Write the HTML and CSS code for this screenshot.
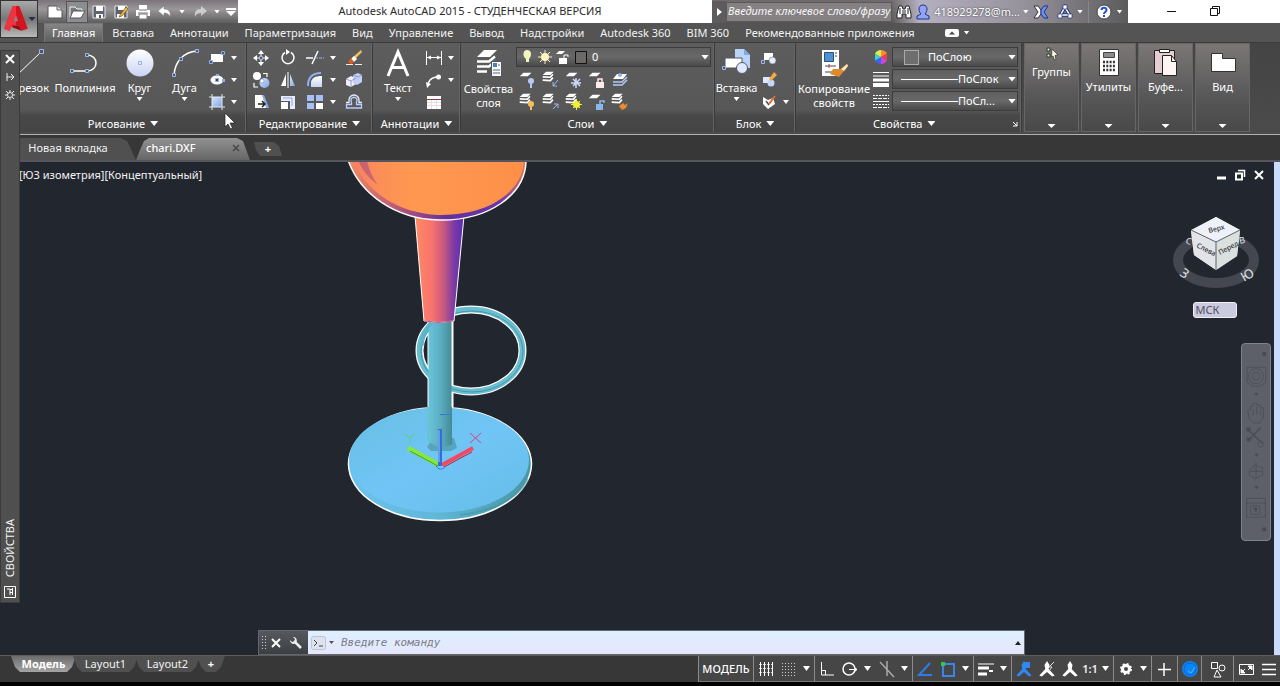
FILE: index.html
```html
<!DOCTYPE html>
<html lang="ru">
<head>
<meta charset="utf-8">
<meta name="viewport" content="width=device-width">
<title>Autodesk AutoCAD 2015</title>
<link rel="stylesheet" href="styles.css">
</head>
<body>
<svg class="defs" aria-hidden="true">
  <defs>
    <linearGradient id="pale" x1="0" y1="0" x2="0" y2="1"><stop offset="0" stop-color="#fff"/><stop offset="1" stop-color="#c9d3f3"/></linearGradient>
    <linearGradient id="blue" x1="0" y1="0" x2="1" y2="1"><stop offset="0" stop-color="#d9e4fb"/><stop offset="1" stop-color="#7fa2e0"/></linearGradient>
    <linearGradient id="seat" x1="0" y1="0" x2="1" y2="0"><stop offset="0" stop-color="#fb7d62"/><stop offset=".14" stop-color="#fb8e58"/><stop offset=".35" stop-color="#ff9850"/><stop offset="1" stop-color="#fd9049"/></linearGradient>
    <linearGradient id="cone" x1="0" y1="0" x2="1" y2="0"><stop offset="0" stop-color="#ff8a62"/><stop offset=".35" stop-color="#f8736f"/><stop offset=".58" stop-color="#c9597f"/><stop offset=".8" stop-color="#7a3aa6"/><stop offset="1" stop-color="#5a2cb4"/></linearGradient>
    <linearGradient id="rim" x1="0" y1="0" x2="1" y2="0"><stop offset="0" stop-color="#f48a60"/><stop offset=".3" stop-color="#b2557c"/><stop offset=".55" stop-color="#64309c"/><stop offset=".85" stop-color="#6a35a8"/><stop offset="1" stop-color="#e37a5e"/></linearGradient>
    <linearGradient id="pole" x1="0" y1="0" x2="1" y2="0"><stop offset="0" stop-color="#68c4d8"/><stop offset=".5" stop-color="#5cafc4"/><stop offset="1" stop-color="#458b96"/></linearGradient>
    <linearGradient id="disc" x1="0" y1="0" x2="1" y2="1"><stop offset="0" stop-color="#67bfe2"/><stop offset=".5" stop-color="#70c5f6"/><stop offset="1" stop-color="#66bde6"/></linearGradient>
    <linearGradient id="side" x1="0" y1="0" x2="1" y2="0"><stop offset="0" stop-color="#6cc3ef"/><stop offset=".5" stop-color="#5fb6d6"/><stop offset="1" stop-color="#4796a4"/></linearGradient>
  </defs>
  <symbol id="i-layers" viewBox="0 0 20 20"><path d="M6 2h9l-4 4H2zM2 7.500h8M2 11.500h8" fill="#fff"/><path d="M2 8l9 .5 3-3.500M2 12l9 .5 3-3.500" fill="none" stroke="#fff" stroke-width="2"/></symbol>
  <symbol id="i-sheet" viewBox="0 0 20 20"><path d="M6 3h9l-4 4H2z" fill="#fff"/></symbol>
  <symbol id="i-person" viewBox="0 0 20 20"><path d="M10 2l2.500 4-.8 4 6 6.500-2.500 1L10 13l-5.200 4.500-2.500-1 6-6.500-.8-4z"/></symbol>
</svg>

<div class="app">
  <header class="top">
    <button class="app-button" aria-label="Меню приложения"><svg width="26" height="28" viewBox="0 0 24 26"><path d="M9 1h6l8 21-6 2-2-5H8l-2 5-5-2z" fill="#d3141f"/><path d="M9 1h3v18H8l-2 5-5-2z" fill="#ef3340"/><path d="M12 9l2 6h-4z" fill="#8d8288"/><path d="M8 19h7l2 5-8-3z" fill="#9c0812"/></svg><i class="caret dark"></i></button>
    <div class="titlebar">
      <div class="qat">
        <button aria-label="Создать"><svg width="18" height="16" viewBox="0 0 18 16"><path d="M2 2h9l5 4v8H2z" fill="#fff" stroke="#555"/><path d="M11 2v4h5" fill="#ddd" stroke="#666"/></svg></button>
        <button class="lit" aria-label="Открыть"><svg width="18" height="16" viewBox="0 0 18 16"><path d="M2 14V3h5l2 2h5v2" fill="#75797e" stroke="#f4f4f4"/><path d="M2 14l3-7h12l-4 7z" fill="#fff" stroke="#555"/></svg></button>
        <button aria-label="Сохранить"><svg width="16" height="16" viewBox="0 0 16 16"><path d="M2 2h12v12H2z" fill="#5d6470" stroke="#e8e8e8"/><path d="M5 2h7v5H5zM5 10h7v4H5z" fill="#fff"/><path d="M8 11h2v3H8z" fill="#555"/></svg></button>
        <button aria-label="Сохранить как"><svg width="16" height="16" viewBox="0 0 16 16"><path d="M2 2h12v12H2z" fill="#5d6470" stroke="#e8e8e8"/><path d="M5 2h7v4H5zM4 10h7v4H4z" fill="#fff"/><path d="M7 11l6-8 2 2-6 7-3 1z" fill="#f0b93c" stroke="#6b4210" stroke-width=".6"/></svg></button>
        <button aria-label="Печать"><svg width="16" height="16" viewBox="0 0 16 16"><path d="M4 1h8v5H4zM1 6h14v6H1z" fill="#fff"/><path d="M4 6h8M3 9h10" stroke="#777"/><path d="M4 10h8v5H4z" fill="#fff" stroke="#777"/></svg></button>
        <button aria-label="Отменить"><svg width="16" height="16" viewBox="0 0 16 16"><path d="M7 2v3c5 0 7 3 6 8-1-3-3-4-6-4v3L1 7z" fill="#fff" stroke="#777" stroke-width=".5"/></svg></button>
        <i class="caret"></i>
        <button class="faded" aria-label="Повторить"><svg width="16" height="16" viewBox="0 0 16 16"><path d="M9 2v3C4 5 2 8 3 13c1-3 3-4 6-4v3l6-5z" fill="#e6e6e6"/></svg></button>
        <i class="caret"></i>
        <button class="slim" aria-label="Настроить панель"><svg width="10" height="10" viewBox="0 0 10 10"><path d="M0 1h10v2H0zM0 4h10L5 9z" fill="#fff"/></svg></button>
      </div>
      <h1 class="title">Autodesk AutoCAD 2015 - СТУДЕНЧЕСКАЯ ВЕРСИЯ</h1>
      <div class="info">
        <button class="slim" aria-label="Свернуть поиск"><svg width="6" height="8" viewBox="0 0 6 8"><path d="M1 0l5 4-5 4z" fill="#fff"/></svg></button>
        <input class="search" type="text" placeholder="Введите ключевое слово/фразу" aria-label="Поиск по справке">
        <button aria-label="Найти"><svg width="16" height="16" viewBox="0 0 16 16"><path d="M3 2h3l1 3h2l1-3h3l2 8v4h-5v-4H6v4H1v-4z" fill="#fff" stroke="#222"/><path d="M4 4v6M12 4v6M7 6v3M9 6v3" stroke="#222"/></svg></button>
        <button class="account"><svg width="16" height="16" viewBox="0 0 16 16"><path d="M8 1c3 0 4 2 4 4s-1 4-2 5l4 2v3H2v-3l4-2C5 9 4 7 4 5s1-4 4-4z" fill="#8da5f2" stroke="#22308f"/></svg><span>418929278@m...</span><i class="caret"></i></button>
        <button aria-label="Exchange"><svg width="16" height="16" viewBox="0 0 16 16"><path d="M1 2h4l3 4v4l-3 4H1l4-6z" fill="#fff" stroke="#333"/><path d="M15 2h-4L8 6v4l3 4h4l-4-6z" fill="#6d93f0" stroke="#22308f"/></svg></button>
        <button class="wide" aria-label="Связь"><svg width="16" height="16" viewBox="0 0 16 16"><path d="M8 3l4.500 8h-9z" fill="none" stroke="#27387f" stroke-width="3.500"/><path d="M8 3l4.500 8h-9z" fill="none" stroke="#fff" stroke-width="1.500"/><path d="M6 1h4v4H6zM1 10h4v4H1zM11 10h4v4h-4z" fill="#fff" stroke="#27387f" stroke-width=".7"/></svg><i class="caret"></i></button>
        <button class="wide help" aria-label="Справка"><svg width="18" height="18" viewBox="0 0 18 18"><circle cx="9" cy="9" r="7" fill="#fff" stroke="#444"/><path d="M6.500 7c0-3 5-3 5 0 0 2-2.500 2-2.500 4" fill="none" stroke="#2b50c8" stroke-width="2"/><path d="M8 12h2v2H8z" fill="#2b50c8"/></svg><i class="caret"></i></button>
      </div>
      <div class="window-buttons">
        <button aria-label="Свернуть"><svg width="12" height="12" viewBox="0 0 12 12"><path d="M1 6.500h9" stroke="#111"/></svg></button>
        <button aria-label="Развернуть"><svg width="12" height="12" viewBox="0 0 12 12"><path d="M1.500 3.500h7v7h-7zM3.500 3V1.500h7v7H9" fill="none" stroke="#111"/></svg></button>
        <button aria-label="Закрыть"></button>
      </div>
    </div>
    <nav class="ribbon-tabs">
      <button class="current">Главная</button><button>Вставка</button><button>Аннотации</button><button>Параметризация</button><button>Вид</button><button>Управление</button><button>Вывод</button><button>Надстройки</button><button>Autodesk 360</button><button>BIM 360</button><button>Рекомендованные приложения</button>
      <button class="ribbon-min" aria-label="Свернуть ленту"><svg width="14" height="8" viewBox="0 0 14 8"><rect width="14" height="8" rx="2" fill="#fff"/><path d="M4 5.500h6l-3-3z" fill="#444"/></svg><i class="caret"></i></button>
    </nav>
  </header>

  <div class="ribbon">
    <section class="panel draw">
      <div class="tools">
        <button class="big line"><svg width="40" height="34" viewBox="0 0 40 34"><path d="M8 30L34 5" stroke="#fff"/><path d="M32.500 2.500h4v4h-4z" fill="#555" stroke="#9db4f5"/></svg><span>Отрезок</span></button>
        <button class="big poly"><svg width="40" height="34" viewBox="0 0 40 34"><path d="M7 24h15c12 0 12-16 0-16" fill="none" stroke="#fff" stroke-width="1.500"/><path d="M5.500 22.500h3v3h-3zM20.500 22.500h3v3h-3zM20.500 6.500h3v3h-3z" fill="#555" stroke="#9db4f5"/></svg><span>Полилиния</span></button>
        <button class="big circle"><svg width="34" height="34" viewBox="0 0 34 34"><circle cx="17" cy="16" r="13.500" fill="url(#pale)"/><path d="M15.500 14.500h3v3h-3z" fill="none" stroke="#8fb3ee"/></svg><span>Круг</span><i class="caret"></i></button>
        <button class="big arc"><svg width="34" height="34" viewBox="0 0 34 34"><path d="M6 28C7 15 15 5 29 4" fill="none" stroke="#fff" stroke-width="1.500"/><path d="M4.500 26.500h3v3h-3zM11.500 10.500h3v3h-3zM27.500 2.500h3v3h-3z" fill="#555" stroke="#9db4f5"/></svg><span>Дуга</span><i class="caret"></i></button>
        <div class="grid pairs">
          <button aria-label="Прямоугольник"><svg width="20" height="20" viewBox="0 0 20 20"><path d="M4 6h12v8H4z" fill="#fff"/><path d="M2.500 12.500h3v3h-3zM14.500 3.500h3v3h-3z" fill="#555" stroke="#8faaf2"/></svg></button><i class="caret"></i>
          <button aria-label="Эллипс"><svg width="20" height="20" viewBox="0 0 20 20"><ellipse cx="10" cy="10" rx="6.500" ry="4.500" fill="#fff"/><path d="M8.500 8.500h3v3h-3z" fill="#445" stroke="#8faaf2"/><path d="M15 9h3v3h-3zM9 4h3v2H9z" fill="#8faaf2"/></svg></button><i class="caret"></i>
          <button aria-label="Штриховка"><svg width="20" height="20" viewBox="0 0 20 20"><path d="M5 5h10v10H5z" fill="url(#blue)"/><path d="M5 2v16M15 2v16M2 5h16M2 15h16" stroke="#dfe7fb"/></svg></button><i class="caret"></i>
        </div>
      </div>
      <h2>Рисование<i class="caret"></i></h2>
    </section>

    <section class="panel edit">
      <div class="tools">
        <div class="grid five">
          <button aria-label="Перенести"><svg width="20" height="20" viewBox="0 0 20 20"><path d="M10 2l3 4H7zM10 18l3-4H7zM2 10l4-3v6zM18 10l-4-3v6z" fill="#fff"/><path d="M10 5v10M5 10h10" stroke="#fff"/><path d="M8.500 8.500h3v3h-3z" fill="#555" stroke="#9db4f5"/></svg></button>
          <button aria-label="Повернуть"><svg width="20" height="20" viewBox="0 0 20 20"><path d="M7 4.500a6 6 0 1 0 6 0" fill="none" stroke="#fff" stroke-width="1.500"/><path d="M8 1v6l4-3z" fill="#fff"/></svg></button>
          <button aria-label="Обрезать"><svg width="20" height="20" viewBox="0 0 20 20"><path d="M1 10h7M7 16l6-13" stroke="#fff" stroke-width="1.500"/><path d="M10 10h9" stroke="#9db4f5" stroke-dasharray="3 1"/></svg></button><i class="caret"></i>
          <button aria-label="Стереть"><svg width="20" height="20" viewBox="0 0 20 20"><path d="M17 2l1 2-8 8-2-2z" fill="#f6c35c"/><path d="M10 8l3 3-3 3-3-3z" fill="#fff"/><path d="M7 10l3 4-3 2-3-2z" fill="#e8581d"/><path d="M2 16.500h16" stroke="#eee" stroke-dasharray="7 2"/></svg></button>
          <button aria-label="Копировать"><svg width="20" height="20" viewBox="0 0 20 20"><circle cx="6" cy="6" r="4" fill="#fff"/><circle cx="13.500" cy="13" r="5" fill="url(#blue)"/><path d="M12 3.500h4V7M3 13v4h4" fill="none" stroke="#fff" stroke-width="1.200"/><circle cx="11" cy="11" r="2" fill="#fff" stroke="#6d86c6" stroke-width=".6"/></svg></button>
          <button aria-label="Зеркало"><svg width="20" height="20" viewBox="0 0 20 20"><path d="M8 4v12H3z" fill="#fff"/><path d="M12 4v12h5z" fill="url(#blue)"/><path d="M10 2v16" stroke="#fff"/></svg></button>
          <button aria-label="Сопряжение"><svg width="20" height="20" viewBox="0 0 20 20"><path d="M6 17V12c1-4 4-6 11-6v11z" fill="url(#pale)"/><path d="M3 16C3 8 7 3 16 3" fill="none" stroke="#8fb0f0" stroke-width="2"/></svg></button><i class="caret"></i>
          <button aria-label="Расчленить"><svg width="20" height="20" viewBox="0 0 20 20"><path d="M2 9l5-3 5 2v6l-5 3-5-2z" fill="#eef1fd"/><path d="M9 5l5-2 4 2v7l-5 3-4-2z" fill="#c2cff8"/><path d="M2 9l5 2 5-3M7 11v6M9 5l5 2 4-2" fill="none" stroke="#8088c0" stroke-width=".8"/></svg></button>
          <button aria-label="Растянуть"><svg width="20" height="20" viewBox="0 0 20 20"><path d="M4 3h7l6 13H4z" fill="#fff"/><path d="M11 3h2l5 13h-3z" fill="#8eaceb"/><path d="M7 12h6M11 9l3 3-3 3" stroke="#222" fill="none" stroke-width="1.500"/></svg></button>
          <button aria-label="Масштаб"><svg width="20" height="20" viewBox="0 0 20 20"><path d="M3 4h14v13h-5V9H3z" fill="#e6ecfd"/><path d="M3 10h7v7H3z" fill="#fff"/><path d="M5 6h9v8" fill="none" stroke="#8ca8e8"/></svg></button>
          <button aria-label="Массив"><svg width="20" height="20" viewBox="0 0 20 20"><path d="M2 3h7v6H2zM11 3h7v6h-7zM2 11h7v6H2z" fill="#a6c0f6"/><path d="M11 11h7v6h-7z" fill="#fff"/></svg></button><i class="caret"></i>
          <button aria-label="Смещение"><svg width="20" height="20" viewBox="0 0 20 20"><path d="M2.500 12.500h5V10a3 3 0 1 1 5 0v2.500h5v3.500h-15z" fill="none" stroke="#b9cdfb" stroke-width="1.300"/><path d="M2 10.500h3V8a5 5 0 0 1 10 0v2.500h3" fill="none" stroke="#e8eeff" stroke-width="1.300"/></svg></button>
        </div>
      </div>
      <h2>Редактирование<i class="caret"></i></h2>
    </section>

    <section class="panel notes">
      <div class="tools">
        <button class="big text"><svg width="30" height="34" viewBox="0 0 30 34"><path d="M5 29L15 5l10 24M8.500 20.500h13" fill="none" stroke="#fff" stroke-width="3"/></svg><span>Текст</span><i class="caret"></i></button>
        <div class="grid pairs">
          <button aria-label="Размер"><svg width="20" height="20" viewBox="0 0 20 20"><path d="M2.500 3v14M17.500 3v14M3 9.500h14" stroke="#fff"/><path d="M3 9.500l4-2v4zM17 9.500l-4-2v4z" fill="#fff"/></svg></button><i class="caret"></i>
          <button aria-label="Выноска"><svg width="20" height="20" viewBox="0 0 20 20"><path d="M4 16c0-4 2-8 8-9" fill="none" stroke="#fff" stroke-width="1.500"/><path d="M2 12l1 6 4-4z" fill="#fff"/><circle cx="14.500" cy="7" r="2.500" fill="#fff"/></svg></button><i class="caret"></i>
          <button aria-label="Таблица"><svg width="20" height="20" viewBox="0 0 20 20"><path d="M3 4h14v13H3z" fill="#fff"/><path d="M3 7.500h14" stroke="#8f3c3c"/><path d="M3 10.500h14M3 13.500h14M7.500 8v9M12.500 8v9" stroke="#e8dcdc"/></svg></button>
        </div>
      </div>
      <h2>Аннотации<i class="caret"></i></h2>
    </section>

    <section class="panel layers">
      <div class="tools">
        <button class="big props"><svg width="32" height="35" viewBox="0 0 32 35"><path d="M11 3h13l-7 7H4z" fill="#fff"/><path d="M4 14.500h12l6-5M4 19.500h12l6-5M4 24.500h10" fill="none" stroke="#fff" stroke-width="2.500"/><path d="M18.500 14.500h10v15h-10z" fill="#f6f8fe" stroke="#555"/><path d="M20 16h4v4h-4z" fill="#4f7fb8"/><path d="M20 23h7M20 26h7M25 18h2" stroke="#667"/></svg><span>Свойства<br>слоя</span></button>
        <div class="layer-side">
          <label class="combo"><svg width="66" height="18" viewBox="0 0 66 18"><path d="M6 2c5 0 5 6 2 9v3H5v-3C1 8 2 2 6 2z" fill="#f3f5bf"/><path d="M24 2v14M17 9h14M19 4l10 10M29 4L19 14" stroke="#f6f2c8"/><circle cx="24" cy="9" r="4" fill="#fbf7c0"/><path d="M38 3h6l-3 3h-6zM38 10h8v6h-8z" fill="#fff"/><path d="M43 10V7h4v2" fill="none" stroke="#fff"/><path d="M54.500 3.500h11v12h-11z" fill="#6c6a68" stroke="#111"/></svg><select aria-label="Слой"><option>0</option></select><i class="caret"></i></label>
          <div class="grid strip">
            <button aria-label="Отключить слой"><svg width="20" height="20"><use href="#i-sheet" width="18" height="18"/><circle cx="13" cy="11" r="3" fill="#bac8f8"/><path d="M13 14v4" stroke="#bac8f8" stroke-width="2"/></svg></button>
            <button aria-label="Изолировать"><svg width="20" height="20"><use href="#i-layers" width="17" height="17"/><path d="M17 10l-5 6M12 12v4h4" stroke="#9cb9f8" fill="none"/></svg></button>
            <button aria-label="Заморозить"><svg width="20" height="20"><use href="#i-sheet" width="18" height="18"/><path d="M12 8v10M7 13h10M9 9l7 7M16 9l-7 7" stroke="#cdd8ff" stroke-width="1.500"/></svg></button>
            <button aria-label="Блокировать"><svg width="20" height="20"><use href="#i-sheet" width="18" height="18"/><path d="M9 12h8v6H9z" fill="#ffecea"/><path d="M11 12V9h4v3" stroke="#ffecea" fill="none" stroke-width="1.500"/></svg></button>
            <button aria-label="Сделать текущим"><svg width="20" height="20" viewBox="0 0 20 20"><path d="M7 4h10l-4 5H3z" fill="#fff"/><path d="M3 12h9l5-5M3 15h9l5-5" fill="none" stroke="#b3c9f3" stroke-width="1.500"/><circle cx="10" cy="5" r="2" fill="#8cb1eb"/></svg></button>
            <button aria-label="Включить все"><svg width="20" height="20"><use href="#i-layers" width="17" height="17"/><circle cx="13" cy="12" r="3" fill="#f8bd5c"/><path d="M13 15v3" stroke="#f8bd5c" stroke-width="2"/></svg></button>
            <button aria-label="Отменить изоляцию"><svg width="20" height="20"><use href="#i-layers" width="17" height="17"/><path d="M12 17l5-5M13 12h4v4" stroke="#9cb9f8" fill="none"/></svg></button>
            <button aria-label="Разморозить все"><svg width="20" height="20"><use href="#i-layers" width="17" height="17"/><circle cx="12.500" cy="12.500" r="3.500" fill="#f4ee35"/><path d="M12.500 7v11M7 12.500h11M9 9l7 7M16 9l-7 7" stroke="#f4ee35"/></svg></button>
            <button aria-label="Разблокировать"><svg width="20" height="20"><use href="#i-sheet" width="18" height="18"/><path d="M9 12h7v6H9z" fill="#8bb6ed"/><path d="M13 12V9h4v2" stroke="#8bb6ed" fill="none" stroke-width="1.500"/></svg></button>
            <button aria-label="Согласовать"><svg width="20" height="20"><use href="#i-layers" width="17" height="17"/><path d="M9 14l4-3 2 2 3-2-2 5-4 2z" fill="#e98b2e"/></svg></button>
          </div>
        </div>
      </div>
      <h2>Слои<i class="caret"></i></h2>
    </section>

    <section class="panel block">
      <div class="tools">
        <button class="big insert"><svg width="34" height="34" viewBox="0 0 34 34"><path d="M15 2h9l6 6v13H15z" fill="#b9d4f8"/><path d="M24 2v6h6" fill="#7fa9e8"/><path d="M5 11h17v10H5z" fill="#fff" stroke="#556"/><circle cx="22" cy="21" r="5.500" fill="#dfe8fc" stroke="#556"/><path d="M2.500 19.500h3v3h-3z" fill="#555" stroke="#9db4f5"/></svg><span>Вставка</span><i class="caret"></i></button>
        <div class="grid pairs">
          <button aria-label="Создать блок"><svg width="20" height="20" viewBox="0 0 20 20"><path d="M5 5h9v7H5z" fill="#fff"/><circle cx="13.500" cy="12.500" r="3.500" fill="#e6ecfb" stroke="#555" stroke-width=".5"/><path d="M2.500 12.500h3v3h-3z" fill="none" stroke="#9db4f5"/></svg></button><span></span>
          <button aria-label="Редактор блоков"><svg width="20" height="20" viewBox="0 0 20 20"><path d="M4 7h9v6H4z" fill="#dfe8fc"/><circle cx="12" cy="13" r="3.500" fill="#c6d7f8"/><path d="M10 9l5-7 3 3-6 6z" fill="#f3a848"/></svg></button><span></span>
          <button aria-label="Атрибуты"><svg width="20" height="20" viewBox="0 0 20 20"><path d="M4 5l5 3 5-2 2 6-7 5-5-5z" fill="#fff"/><path d="M7 9l3 4" stroke="#555" stroke-width="1.500"/><path d="M10 12l6-8" stroke="#d76c2c" stroke-width="2"/></svg></button><i class="caret"></i>
        </div>
      </div>
      <h2>Блок<i class="caret"></i></h2>
    </section>

    <section class="panel attrs">
      <div class="tools">
        <button class="big match"><svg width="32" height="35" viewBox="0 0 32 35"><path d="M4 3h17v26H4z" fill="#fff"/><path d="M6.500 5.500h9v9h-9z" fill="#5190cf" stroke="#245181"/><path d="M17 6h2M17 9h2M7 19h11M7 25h8" stroke="#445"/><path d="M11 17v4" stroke="#c33"/><path d="M15 22l8 0 6-5 1 2-4 5-5 6-9-3z" fill="#e08a2e"/><path d="M23 22l6-5 1 2-4 5z" fill="#ffe3b5"/></svg><span>Копирование<br>свойств</span></button>
        <div class="rows">
          <label class="row"><svg width="18" height="20" viewBox="0 0 18 20"><path d="M9 10V3a7 7 0 0 1 6 3.500z" fill="#ff8c2e"/><path d="M9 10l6-3.500v7z" fill="#ef3f4d"/><path d="M9 10l6 3.500A7 7 0 0 1 9 17z" fill="#cf46df"/><path d="M9 10v7a7 7 0 0 1-6-3.500z" fill="#3c62f0"/><path d="M9 10l-6 3.500v-7z" fill="#3fd0d8"/><path d="M9 10L3 6.500A7 7 0 0 1 9 3z" fill="#d7f14e"/></svg><span class="combo"><i class="swatch"></i><select aria-label="Цвет"><option>ПоСлою</option></select><i class="caret"></i></span></label>
          <label class="row"><svg width="18" height="20" viewBox="0 0 18 20"><path d="M1 3.500h16M1 7h16" stroke="#fff"/><path d="M1 11h16" stroke="#fff" stroke-width="3"/><path d="M1 16h16" stroke="#fff" stroke-width="4"/></svg><span class="combo"><i class="rule"></i><select aria-label="Вес линий"><option>ПоСлок</option></select><i class="caret"></i></span></label>
          <label class="row"><svg width="18" height="20" viewBox="0 0 18 20"><path d="M1 4.500h16M1 13.500h16" stroke="#fff" stroke-dasharray="2 1"/><path d="M1 7.500h16M1 16.500h16" stroke="#fff" stroke-dasharray="4 1"/><path d="M1 10.500h16" stroke="#fff"/></svg><span class="combo"><i class="rule"></i><select aria-label="Тип линий"><option>ПоСл...</option></select><i class="caret"></i></span></label>
        </div>
      </div>
      <h2>Свойства<i class="caret"></i><button class="launcher" aria-label="Открыть свойства"><svg width="6" height="6" viewBox="0 0 6 6"><path d="M1 1l4 4M5 1v4H1" fill="none" stroke="#fff"/></svg></button></h2>
    </section>

    <button class="closed compact"><svg width="14" height="14" viewBox="0 0 14 14"><path d="M2 1h3v3H2zM2 7h3v3H2z" fill="#dff0c0" stroke="#333"/><path d="M7 2l6 6-3 .5 1 4-1.500.5-1.500-4-1.500 1z" fill="#f6f6d8" stroke="#333" stroke-width=".7"/></svg><span>Группы</span><i class="caret"></i></button>
    <button class="closed"><svg width="28" height="30" viewBox="0 0 28 30"><path d="M4.500 2.500h19v26h-19z" fill="#fff" stroke="#333"/><path d="M8.500 5.500h11v5h-11z" fill="#8b8b8b" stroke="#444"/><path d="M8 15h12M8 19h12M8 23h12" stroke="#333" stroke-width="2.500" stroke-dasharray="2 1.300"/></svg><span>Утилиты</span><i class="caret"></i></button>
    <button class="closed"><svg width="28" height="30" viewBox="0 0 28 30"><path d="M2.500 3.500h20v23h-20z" fill="#e5cfd3" stroke="#222"/><path d="M7.500 2.500h10v3h-10z" fill="#fff" stroke="#222"/><path d="M10.500 8.500h9l5 6v14h-14z" fill="#fff5f3" stroke="#222"/><path d="M19.500 8.500v6h5" fill="none" stroke="#222"/></svg><span>Буфе...</span><i class="caret"></i></button>
    <button class="closed"><svg width="28" height="30" viewBox="0 0 28 30"><path d="M2.500 6.500h11v5h13v13h-24z" fill="#fff" stroke="#333"/></svg><span>Вид</span><i class="caret"></i></button>
  </div>

  <nav class="doc-tabs">
    <button class="doc">Новая вкладка</button>
    <button class="doc current">chari.DXF<svg width="8" height="8" viewBox="0 0 8 8"><path d="M1 1l6 6M7 1L1 7" stroke="#4a4a4a" stroke-width="1.500"/></svg></button>
    <button class="doc add" aria-label="Новый чертеж">+</button>
  </nav>

  <main class="viewport">
    <svg class="scene" width="560" height="400" viewBox="0 162 560 400" role="img" aria-label="Барный стул">
      <path d="M429 321h23v120h-23z" fill="#fff" stroke="#fff" stroke-width="3"/>
      <ellipse cx="440" cy="464" rx="91.500" ry="56.500" fill="url(#side)" stroke="#fff" stroke-width="1.500"/>
      <ellipse cx="439" cy="460" rx="90" ry="52.500" fill="url(#disc)"/>
      <path d="M528 479c-8 18-34 32-68 36" fill="none" stroke="#4293a0" stroke-width="2" opacity=".5"/>
      <path d="M431 441l-4 6 4 4h20l6-3-3-10z" fill="#55a5bd"/>
      <path d="M427 440v-33h25v37q-12 8-25-4z" fill="url(#pole)"/>
      <ellipse cx="471" cy="350.500" rx="51.500" ry="41" fill="none" stroke="#fff" stroke-width="8"/>
      <ellipse cx="471" cy="350.500" rx="51.500" ry="41" fill="none" stroke="#68bdd0" stroke-width="5.500"/>
      <ellipse cx="472" cy="351.500" rx="51" ry="40.500" fill="none" stroke="#4797a5" stroke-width="1"/>
      <path d="M428.500 320h23v120h-23z" fill="url(#pole)"/>
      <path d="M431 323c-6 7-9 14-9.500 23" fill="none" stroke="#5eb4c9" stroke-width="4"/>
      <path d="M415 216l9 105q14 3 30 0l10-105z" fill="url(#cone)" stroke="#fff"/>
      <path d="M424 321q14 3 29 0" stroke="#b85682" fill="none"/>
      <path d="M348 160c12 34 47 59 91 60 49 1 87-25 87-60z" fill="url(#rim)" stroke="#fff" stroke-width="1.500"/>
      <path d="M353 160c12 30 43 53 85 55 47 1 84-20 86-55z" fill="url(#seat)"/>
      <path d="M358 160c5 12 11 18 20 25-6-8-9-15-11-25z" fill="#b4557c" opacity=".7"/>
      <path d="M408 448l31 17" stroke="#83e83f" stroke-width="5"/><path d="M410 451l28 15" stroke="#4a9f28"/>
      <path d="M442 465l31-17" stroke="#f44862" stroke-width="4"/><path d="M444 467l28-15" stroke="#a82d48"/>
      <path d="M440 466v-37" stroke="#2f6fd8" stroke-width="4"/><path d="M439 430v32" stroke="#a6c9f8"/>
      <path d="M470 433l11 10M481 433l-11 10" stroke="#dc3f7d" fill="none"/><path d="M404 433l6 5 5-5M410 438v5" stroke="#65ca7d" fill="none"/><path d="M440 414.500h11M436 466q4 6 9 1" stroke="#2c7fe0" fill="none"/>
    </svg>
    <div class="view-head"><span>[ЮЗ изометрия][Концептуальный]</span>
      <div class="view-buttons">
        <button aria-label="Свернуть вид"><svg width="12" height="12" viewBox="0 0 12 12"><path d="M2 9h9" stroke="#fff" stroke-width="3"/></svg></button>
        <button aria-label="Восстановить вид"><svg width="12" height="12" viewBox="0 0 12 12"><path d="M2 4.500h6v6H2z" fill="none" stroke="#fff" stroke-width="2"/><path d="M4 1.500h6.500V8" fill="none" stroke="#fff" stroke-width="1.500"/></svg></button>
        <button aria-label="Закрыть вид"><svg width="12" height="12" viewBox="0 0 12 12"><path d="M2 2l8 8M10 2l-8 8" stroke="#fff" stroke-width="2"/></svg></button>
      </div>
    </div>
    <div class="cube">
      <svg width="90" height="78" viewBox="0 0 90 78" role="img" aria-label="Видовой куб">
        <ellipse cx="45" cy="47" rx="38" ry="23" fill="none" stroke="#44474f" stroke-width="10"/>
        <path d="M45 4l24 13-3 26-21 14-22-15-3-24z" fill="#e9eaec"/>
        <path d="M20 17L45 4l24 13-24 12z" fill="#eff1f9"/><path d="M20 17l25 12v28L23 42z" fill="#e2e4e8"/><path d="M69 17L45 29v28l21-14z" fill="#dbe0df"/>
        <path d="M20 17l25 12 24-12M45 29v28" fill="none" stroke="#5d6066"/>
        <g class="cube-text"><text transform="translate(38 20) rotate(-14)">Верх</text><text transform="translate(25 34) rotate(27)">Слева</text><text transform="translate(49 42) rotate(-28)">Перед</text></g>
        <g class="compass"><text transform="translate(14 30) rotate(20)" class="dim">С</text><text transform="translate(69 31) rotate(-15)" class="dim">В</text><text transform="translate(8 62) rotate(35)">З</text><text transform="translate(73 69) rotate(-30)">Ю</text></g>
      </svg>
      <button class="ucs">МСК</button>
    </div>
    <div class="navbar">
      <svg width="28" height="196" viewBox="0 0 30 199" role="img" aria-label="Панель навигации"><g fill="none" stroke="#4d5058"><path d="M5.500 19.500h20v16l-6 4h-8l-6-4z"/><circle cx="15" cy="29" r="8"/><circle cx="15" cy="29" r="4"/><path d="M8 75l-2-9 3-1V61h3v-3h4v2h4v3h3v10l-4 6h-7z"/><path d="M12 64v7M16 62v8M20 64v7"/><path d="M5 85l17 16M7 98l13-14" stroke-width="2"/><circle cx="20" cy="102" r="3"/><path d="M8 130l5-6 9 3v8l-8 4-6-4zM9 131h12M15 121v18"/><path d="M5 160h20v20H5zM5 165h20M9 168h10v9H9z"/></g><path d="M13 47h5l-2.500 3zM13 112h5l-2.500 3zM13 147h5l-2.500 3zM5 84h4v4H5zM5 95h4v4H5zM22 3h4v4h-4zM22 191h4v4h-4zM12 170l5 0-2 5z" fill="#474a52"/></svg>
    </div>
    <form class="command">
      <i class="grip"></i>
      <button type="button" aria-label="Закрыть строку"><svg width="10" height="10" viewBox="0 0 10 10"><path d="M1 1l8 8M9 1L1 9" stroke="#fff" stroke-width="2"/></svg></button>
      <button type="button" aria-label="Настройка"><svg width="14" height="14" viewBox="0 0 14 14"><path d="M5 5l7 7" stroke="#eee" stroke-width="2.500"/><path d="M4 1a3.500 3.500 0 0 1 3.500 5L6 7.500A3.500 3.500 0 0 1 1 4l2 2 2.500-.5L6 3z" fill="#eee"/></svg></button>
      <label><svg width="24" height="16" viewBox="0 0 24 16"><rect x=".5" y="1.500" width="14" height="13" rx="2" fill="#dde3ee" stroke="#bcc3d2"/><path d="M3 5l3 3-3 3M8 11h4" fill="none" stroke="#444"/><path d="M18 6h5l-2.500 3z" fill="#555"/></svg><input placeholder="Введите команду" aria-label="Командная строка"><i class="caret up"></i></label>
    </form>
  </main>

  <footer class="bottom">
    <nav class="layout-tabs"><button class="current">Модель</button><button>Layout1</button><button>Layout2</button><button class="add" aria-label="Новый лист">+</button></nav>
    <div class="status">
      <div><button class="mode">МОДЕЛЬ</button></div>
      <div><button aria-label="Сетка"><svg width="20" height="20" viewBox="0 0 20 20"><path d="M4.500 3v14M8.500 3v14M12.500 3v14M16.500 3v14" stroke="#fff"/><path d="M3 5.500h14M3 9.500h14M3 13.500h14" stroke="#ccc" stroke-dasharray="1 1"/></svg></button><button aria-label="Привязка"><svg width="20" height="20" viewBox="0 0 20 20"><path d="M3 4.500h14M3 7.500h14M3 10.500h14M3 13.500h14M3 16.500h14" stroke="#ccc" stroke-dasharray="1 2"/></svg></button><i class="caret"></i></div>
      <div><button aria-label="Орто"><svg width="20" height="20" viewBox="0 0 20 20"><path d="M4.500 3v13H17M4.500 11.500h4V16" fill="none" stroke="#fff"/></svg></button><button aria-label="Полярное отслеживание"><svg width="20" height="20" viewBox="0 0 20 20"><circle cx="9" cy="10" r="6" fill="none" stroke="#fff" stroke-width="1.500"/><path d="M9 10.500h8M14 8l3 2.500-3 2.500" fill="none" stroke="#fff"/></svg></button><i class="caret"></i><button aria-label="Изометрия"><svg width="20" height="20" viewBox="0 0 20 20"><path d="M3 3l14 15M10 2v15" stroke="#aaa" stroke-width="1.500"/></svg></button><i class="caret"></i></div>
      <div><button aria-label="Объектное отслеживание"><svg width="20" height="20" viewBox="0 0 20 20"><path d="M15 4L4 16h13" fill="none" stroke="#2f7be8" stroke-width="2"/></svg></button><button aria-label="Объектная привязка"><svg width="20" height="20" viewBox="0 0 20 20"><path d="M5 5h11v12H5z" fill="none" stroke="#3d83ed" stroke-width="2"/><path d="M3 3h4v4H3z" fill="#34c740"/></svg></button><i class="caret"></i></div>
      <div><button aria-label="Вес линий"><svg width="20" height="20" viewBox="0 0 20 20"><path d="M2 5h16" stroke="#fff"/><path d="M2 9h11M2 15h9" stroke="#fff" stroke-width="3"/><path d="M13 12h4" stroke="#fff" stroke-width="2"/></svg></button><i class="caret"></i></div>
      <div><button aria-label="Показать аннотации"><svg width="20" height="20" fill="#3188f4"><use href="#i-person"/><path d="M9 3h7v6h-6z"/></svg></button><button aria-label="Добавить масштабы"><svg width="20" height="20" fill="#fff"><use href="#i-person"/><path d="M17 3l-5 5 3 0-3 4" fill="none" stroke="#ddd"/></svg></button><button aria-label="Масштаб аннотаций"><svg width="20" height="20" fill="#fff"><use href="#i-person"/></svg></button><button class="ratio">1:1</button><i class="caret"></i></div>
      <div><button aria-label="Рабочее пространство"><svg width="20" height="20" viewBox="0 0 20 20"><circle cx="10" cy="10" r="3.500" fill="none" stroke="#fff" stroke-width="3"/><circle cx="10" cy="10" r="5" fill="none" stroke="#fff" stroke-width="2" stroke-dasharray="2 1.930"/></svg></button><i class="caret"></i></div>
      <div class="plus"><button aria-label="Монитор аннотаций"><svg width="20" height="20" viewBox="0 0 20 20"><path d="M10 4v13M4 10.500h13" stroke="#fff" stroke-width="1.500"/></svg></button></div>
      <div><button aria-label="Графика"><svg width="20" height="20" viewBox="0 0 20 20"><circle cx="10" cy="10" r="8" fill="#0b84f6"/><circle cx="10" cy="10" r="6" fill="none" stroke="#0b62cf"/><path d="M8 12l3 2 4-6" stroke="#64b3ff" fill="none"/></svg></button></div>
      <div class="pad"><button aria-label="Изолировать объекты"><svg width="20" height="20" viewBox="0 0 20 20"><path d="M3.500 3.500h6v6h-6zM9 11l4 7H6z" fill="none" stroke="#fff"/><circle cx="14" cy="9" r="3" fill="none" stroke="#fff"/></svg></button></div>
      <div><button aria-label="Очистить экран"><svg width="20" height="20" viewBox="0 0 20 20"><path d="M3.500 5.500h14v10h-14z" fill="none" stroke="#fff"/><path d="M12 7h4v4zM5 10v4h4zM5 14l4-4M12 11l4-4" fill="#fff" stroke="#fff"/></svg></button><button aria-label="Меню"><svg width="20" height="20" viewBox="0 0 20 20"><path d="M3 5.500h14M3 10.500h14M3 15.500h14" stroke="#fff" stroke-width="1.500"/></svg></button></div>
    </div>
  </footer>
  <div class="edge"></div>

  <aside class="palette">
    <button aria-label="Закрыть палитру"><svg width="10" height="10" viewBox="0 0 10 10"><path d="M1 1l8 8M9 1L1 9" stroke="#fff" stroke-width="2"/></svg></button>
    <button aria-label="Автоскрытие"><svg width="10" height="10" viewBox="0 0 10 10"><path d="M2 1v8M2 5h6M6 2l3 3-3 3" stroke="#eee" fill="none"/></svg></button>
    <button aria-label="Параметры палитры"><svg width="10" height="10" viewBox="0 0 10 10"><circle cx="5" cy="5" r="2.500" fill="none" stroke="#eee"/><path d="M5 0v2M5 8v2M0 5h2M8 5h2M1 1l2 2M7 7l2 2M9 1L7 3M3 7L1 9" stroke="#eee"/></svg></button>
    <span>СВОЙСТВА</span>
    <svg width="12" height="14" viewBox="0 0 12 14"><path d="M.5 1.500h11v11H.5z" fill="none" stroke="#fff"/><path d="M3 4h3v6M8.500 3v7M6 4.500h3M6 7.500h3" stroke="#fff" fill="none"/></svg>
  </aside>
  <svg class="pointer" width="12" height="18" viewBox="0 0 12 18" aria-hidden="true"><path d="M1 1v14l3-3 2.500 5 2-1-2.500-5H11z" fill="#fff" stroke="#222" stroke-width=".7"/></svg>
</div>
</body>
</html>
```
FILE: styles.css
```css
* { box-sizing: border-box; }
body { margin: 0; background: #000; color: #f2f2f2; font: 11px/14px "Noto Sans", "Open Sans", sans-serif; }
button, input, select { font: inherit; color: inherit; background: none; border: 0; padding: 0; margin: 0; border-radius: 0; }
button { display: flex; align-items: center; justify-content: center; }
input, select { outline: 0; appearance: none; min-width: 0; }
svg { display: block; flex: none; }
.defs { position: absolute; width: 0; height: 0; }
.app { position: relative; display: flex; flex-direction: column; min-height: 100vh; overflow: hidden; background: #373737; }
.caret { flex: none; width: 6px; height: 4px; background: #fff; clip-path: polygon(0 0, 100% 0, 50% 100%); }
.caret.dark { background: #222c44; width: 7px; }
.caret.up { background: #222; transform: rotate(180deg); }

/* title bar and ribbon tabs */
.top { display: grid; grid-template: 23px 19px / 38px 1fr; background: #545454; }
.app-button { grid-row: 1 / 3; height: 38px; border: 1px solid #333; background: linear-gradient(#aaa, #767676 50%, #b9b9b9); }
.titlebar { display: flex; background: #fff; }
.qat { display: flex; align-items: center; width: 200px; padding-left: 6px; background: linear-gradient(#7b7479, #9b9799 40%, #5d5d5d); }
.qat button { flex: none; width: 22px; height: 22px; }
.qat .lit { border: 1px solid #555; background: #8b8d8e; }
.qat .slim { width: 14px; }
.qat .faded { opacity: .7; }
.qat .caret { margin: 0 4px 0 3px; }
.title { flex: 1; margin: 0; color: #2b2b2b; font-size: 11px; font-weight: 400; line-height: 22px; text-align: center; white-space: nowrap; padding-right: 10px; }
.info { display: flex; align-items: center; background: linear-gradient(90deg, transparent 43%, #b5b0c0 50%, #96929c 75%, #5c5c5c), linear-gradient(#6f6b6e, #555); }
.info button { width: 23px; height: 22px; }
.info .slim { width: 14px; background: #5d5b5d; }
.info .search { width: 166px; height: 20px; padding: 0 0 2px 1px; border: 1px solid #5a5a5a; background: #858183; font-style: italic; }
.search::placeholder { color: #f6f6f6; opacity: 1; }
.info .account { width: 114px; gap: 3px; color: #fff; text-shadow: 0 0 2px #333; }
.info .wide { width: 36px; gap: 4px; }
.info .help { width: 40px; border-left: 1px solid #888; }
.window-buttons { display: flex; width: 152px; padding-left: 22px; }
.window-buttons button { width: 43px; height: 22px; }
.ribbon-tabs { display: flex; gap: 2px; padding-left: 6px; white-space: nowrap; }
.ribbon-tabs button { padding: 0 7px; height: 19px; }
.ribbon-tabs .current { border: solid #777; border-width: 1px 1px 0; background: linear-gradient(#858585, #5e5e5e); color: #fff; }
.ribbon-tabs .ribbon-min { margin-left: 14px; gap: 5px; }

/* ribbon */
.ribbon { display: flex; height: 93px; padding-bottom: 2px; border-bottom: 1px solid #b1b1b1; background: linear-gradient(#444, #4b4b4b); box-shadow: inset 0 1px #3b3b3b; }
.panel { display: flex; flex-direction: column; flex: none; border-right: 1px solid #3b3b3b; box-shadow: inset -1px 0 #646464; background: linear-gradient(#5d5d5d, #575757 75%, #484848 82%, #444); margin-top: 1px; }
.tools { display: flex; flex: 1; padding-top: 4px; }
.panel h2 { display: flex; align-items: center; justify-content: center; gap: 5px; margin: 0; height: 17px; font-size: 11px; font-weight: 400; color: #fff; }
.panel h2 .caret { width: 8px; height: 5px; }
.big { flex-direction: column; justify-content: flex-start; height: 66px; }
.big span, .closed span { color: #fff; font-weight: 400; white-space: nowrap; line-height: 14px; }
.big .caret { margin-top: 2px; }
.grid { display: grid; align-content: start; align-items: center; justify-items: center; grid-auto-rows: 22px; }
.pairs { grid-template-columns: 22px 12px; }
.five { grid-template-columns: 27px 27px 27px 10px 31px; }
.strip { grid-template-columns: repeat(5, 23px); }
.draw { width: 247px; }
.draw .line { width: 54px; }
.draw .poly { width: 62px; }
.draw .circle { width: 47px; }
.draw .arc { width: 43px; }
.edit { width: 126px; }
.notes { width: 88px; }
.text { width: 50px; }
.layers { width: 254px; }
.props { width: 55px; }
.layer-side { flex: 1; padding-right: 3px; }
.layer-side .combo { margin-bottom: 2px; }
.block { width: 81px; }
.insert { width: 43px; }
.attrs { width: 226px; }
.match { width: 76px; }
.rows { display: flex; flex-direction: column; flex: 1; gap: 2px; }
.row { display: flex; gap: 2px; padding-right: 3px; }
.combo { display: flex; align-items: center; flex: 1; height: 20px; padding: 0 1px 0 4px; gap: 5px; border: 1px solid #3c3c3c; background: linear-gradient(#5f5f5f, #686868 50%, #4a4a4a); color: #fff; }
.combo select { flex: 1; }
.combo .caret { width: 8px; height: 5px; }
.row .combo { padding-left: 8px; gap: 0; }
.swatch { width: 15px; height: 15px; margin: 0 9px 0 3px; border: 1px solid #aaa; background: #6e6e6e; }
.rule { width: 57px; height: 1px; background: #fff; }
.panel h2 .launcher { margin: 0 3px 0 -8px; }
.attrs h2 { justify-content: flex-end; gap: 0; }
.attrs h2 .caret { margin: 0 auto 0 5px; }
.attrs h2::before { content: ""; width: 77px; }
.closed { flex-direction: column; justify-content: flex-start; width: 55px; margin: 1px 0 0 2px; padding: 3px 0; background: linear-gradient(#7c7777, #555 65%, #494949); border: 1px solid #666; }
.closed span { margin-top: 3px; }
.closed.compact span { margin-top: 4px; }
.closed .caret { margin-top: auto; width: 8px; }

/* drawing tabs */
.doc-tabs { display: flex; align-items: flex-end; height: 27px; padding-left: 20px; background: #373737; border-bottom: 2px solid #56555d; }
.doc { height: 22px; padding-bottom: 2px; font-size: 11px; }
.doc:first-child { width: 116px; padding-right: 20px; background: #505050; clip-path: polygon(0 0, 101px 0, 107px 3px, 110px 9px, 116px 100%, 0 100%); }
.doc.current { width: 114px; padding: 0 10px 2px; justify-content: space-between; background: linear-gradient(#929292, #666); color: #fff; font-weight: 500; clip-path: polygon(0 100%, 4px 12px, 8px 3px, 13px 0, 101px 0, 107px 3px, 111px 14px, 100% 100%); }
.doc.add { width: 28px; height: 14px; margin: 0 0 4px 4px; padding: 0 0 1px; background: #505050; color: #fff; font-weight: 700; clip-path: polygon(0 0, 20px 0, 25px 4px, 28px 100%, 6px 100%, 2px 8px); }

/* drawing area */
.viewport { position: relative; flex: 1; display: flex; flex-direction: column; min-height: 493px; background: #22262f; border-right: 6px solid #c9dbff; }
.scene { position: absolute; left: 0; top: 0; }
.view-head { display: flex; align-items: center; justify-content: space-between; height: 26px; padding: 0 9px 0 19px; }
.view-buttons { display: flex; gap: 7px; }
.cube { position: absolute; right: 13px; top: 51px; display: flex; flex-direction: column; align-items: center; }
.cube-text text { font-size: 7px; font-weight: 500; fill: #33363c; }
.compass text { font-size: 13px; fill: #dfe0e4; }
.compass .dim { font-size: 9px; }
.ucs { width: 44px; height: 16px; margin: 11px 3px 0 0; padding-right: 14px; border: 1px solid #eef; border-radius: 3px; background: #cbc9df; color: #50505e; }
.navbar { position: absolute; right: 3px; top: 181px; background: #5d6069; border: 1px solid #80828a; border-radius: 4px; }
.command { display: flex; margin: auto 249px 0 258px; height: 25px; border: 1px solid #606770; background: linear-gradient(#55595e, #3c3e42); }
.grip { width: 6px; margin: 4px 3px 4px 2px; background: radial-gradient(circle, #ccc 1px, transparent 1px) 0 0 / 3px 3px; }
.command button { width: 11px; margin-right: 8px; }
.command button + button { width: 14px; margin-right: 5px; }
.command label { display: flex; align-items: center; flex: 1; gap: 6px; padding: 0 3px; background: linear-gradient(#def0ff, #e6e6fc); color: #666; }
.command input { flex: 1; font: italic 11px/14px "DejaVu Sans Mono", "Liberation Mono", monospace; }
.command input::placeholder { color: #7b7d88; opacity: 1; }

/* layout tabs and status bar */
.bottom { display: flex; justify-content: space-between; height: 27px; border-top: 1px solid #5c5c5c; background: #373737; }
.layout-tabs { display: flex; padding-left: 11px; }
.layout-tabs button { width: 65px; height: 16px; background: #505050; clip-path: polygon(0 0, 100% 0, calc(100% - 4px) 11px, calc(100% - 9px) 100%, 9px 100%, 4px 11px); }
.layout-tabs button + button { margin-left: -3px; }
.layout-tabs .current { background: linear-gradient(#6c6c6c, #a4a4a4); color: #fff; font-weight: 700; }
.layout-tabs .add { width: 28px; color: #fff; font-weight: 700; }
.status { display: flex; height: 26px; border-bottom: 1px solid #777; background: #464646; }
.status div { display: flex; align-items: center; border-left: 1px solid #8b8b8b; }
.status button { width: 23px; height: 25px; }
.status .caret { width: 7px; height: 5px; margin: 0 4px 0 3px; }
.status .mode { width: 54px; font-weight: 500; color: #fff; }
.status .ratio { width: 18px; font-weight: 600; }
.status .pad { padding: 0 4px; }
.status .plus { padding-right: 2px; }
.edge { height: 4px; background: #000; }

/* overlays */
.palette { position: absolute; left: 0; top: 50px; width: 20px; height: 553px; display: flex; flex-direction: column; align-items: center; gap: 8px; padding: 3px 0 3px; border: 1px solid #3b3b3b; background: #4f4f4f; }
.palette button { height: 10px; }
.palette span { margin-top: auto; writing-mode: vertical-rl; transform: rotate(180deg); font-size: 11px; line-height: 16px; }
.pointer { position: absolute; left: 224px; top: 112px; }
```
